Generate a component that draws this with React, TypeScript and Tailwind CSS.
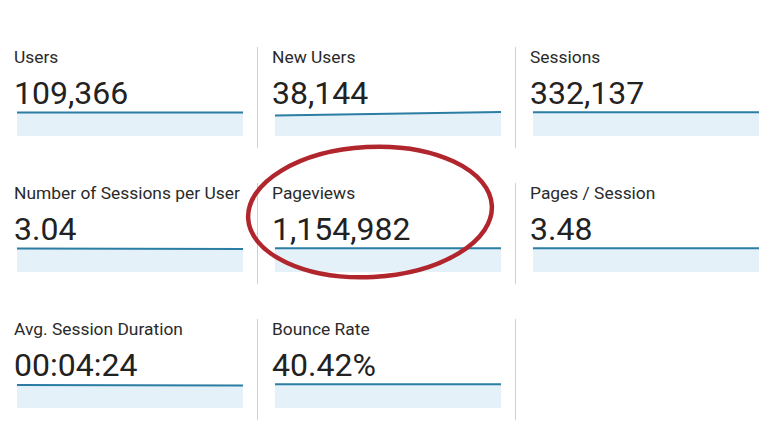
import React from 'react';

type Metric = {
  label: string;
  value: string;
  // y position of the trend line at the left and right end of the sparkline
  from?: number;
  to?: number;
};

const METRICS: Metric[] = [
  { label: 'Users', value: '109,366', from: 1.5, to: 1.5 },
  { label: 'New Users', value: '38,144', from: 4.5, to: 1 },
  { label: 'Sessions', value: '332,137' },
  { label: 'Number of Sessions per User', value: '3.04', from: 1.5, to: 2 },
  { label: 'Pageviews', value: '1,154,982' },
  { label: 'Pages / Session', value: '3.48' },
  { label: 'Avg. Session Duration', value: '00:04:24', from: 2, to: 2.5 },
  { label: 'Bounce Rate', value: '40.42%' },
];

const Sparkline = ({ from = 1.3, to = 1.3 }: { from?: number; to?: number }) => (
  <svg width="226" height="25" viewBox="0 0 226 25" className="block ml-[3px]">
    <polygon points={`0,${from} 226,${to} 226,25 0,25`} fill="#e4f1f8" />
    <line x1="0" y1={from} x2="226" y2={to} stroke="#2b7da4" strokeWidth="2" />
  </svg>
);

const MetricCell = ({ metric, index }: { metric: Metric; index: number }) => (
  <div className={index % 3 === 0 ? 'pl-[14px] h-[101px]' : 'pl-[14px] h-[101px] border-l border-[#cfcfcf]'}>
    <div className="text-[17.4px] leading-[20px] text-[#2a2a2a]">{metric.label}</div>
    <div className="mt-[8px] text-[32px] leading-[36px] text-[#222222]">{metric.value}</div>
    <Sparkline from={metric.from} to={metric.to} />
  </div>
);

export default function App() {
  return (
    <div
      className="relative w-[765px] h-[428px] overflow-hidden bg-white pt-[47px]"
      style={{ fontFamily: 'Roboto, "Liberation Sans", sans-serif' }}
    >
      <div className="grid grid-cols-[257px_258px_250px] gap-y-[35px]">
        {METRICS.map((m, i) => (
          <MetricCell key={m.label} metric={m} index={i} />
        ))}
        <div className="h-[101px] border-l border-[#cfcfcf]" />
      </div>

      {/* hand-drawn highlight round Pageviews */}
      <svg className="absolute left-0 top-0 pointer-events-none" width="765" height="428">
        <ellipse
          cx="370"
          cy="212"
          rx="122"
          ry="65"
          transform="rotate(-3 370 212)"
          fill="none"
          stroke="#b1252c"
          strokeWidth="4.5"
        />
      </svg>
    </div>
  );
}
